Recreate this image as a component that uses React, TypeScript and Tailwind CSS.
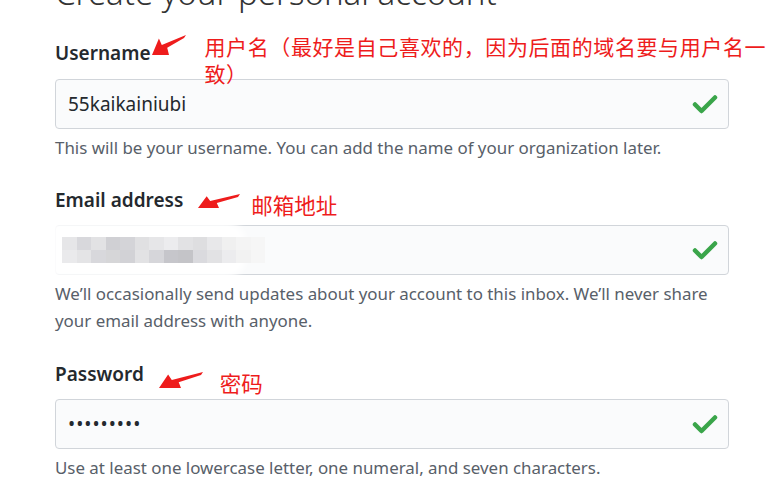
import React from "react";

const Check = () => (
  <svg width="26" height="20" viewBox="0 0 26 20" className="shrink-0">
    <path
      d="M3 10.5l6.5 6.5L23 3.5"
      fill="none"
      stroke="#3aa54a"
      strokeWidth="4.5"
      strokeLinecap="round"
      strokeLinejoin="round"
    />
  </svg>
);

// red annotation arrow, drawn from tail to tip
const Arrow = ({ w, h }: { w: number; h: number }) => (
  <svg width={w} height={h} viewBox={`0 0 ${w} ${h}`}>
    <polygon
      points={`${w - 1},1 ${w - 3},4 ${w * 0.45},${h * 0.62} ${w * 0.5},${h - 1} 1,${h - 1} ${w * 0.22},${h * 0.2} ${w * 0.3},${h * 0.5}`}
      fill="#ee1c1c"
    />
  </svg>
);

const pixels = [
  ["#e6e6e8", "#d8d8dc", "#e2e2e4", "#d0d0d4", "#d4d4d8", "#e0e0e2", "#e6e6e8", "#ececee", "#e2e2e4", "#dedee0", "#e8e8ea", "#f0f0f0", "#f4f4f4", "#f6f6f6"],
  ["#eaeaec", "#e4e4e6", "#d8d8dc", "#d6d6d8", "#d2d2d6", "#e2e2e4", "#d6d6da", "#c6c6cb", "#c4c4c8", "#dadade", "#e2e2e4", "#ececee", "#f2f2f2", "#f6f6f6"],
];

export default function App() {
  return (
    <div className="w-[768px] h-[490px] overflow-hidden bg-white pl-[55px] pr-[39px] font-['Segoe_UI','Noto_Sans',sans-serif] text-[#24292e]">
      <h1 className="-mt-[27px] text-[33px] font-light leading-[40px] text-[#333]">
        Create your personal account
      </h1>

      <div className="mt-[19px]">
        <div className="flex items-start h-[34px]">
          <span className="text-[19px] font-semibold leading-[34px] mt-[4px]">Username</span>
          <div className="mt-[2px]"><Arrow w={36} h={22} /></div>
          <div className="ml-[18px] mt-[1px] text-[21px] tracking-[0.6px] leading-[27px] text-[#ee1c1c] font-['Noto_Sans_CJK_SC',sans-serif] whitespace-nowrap">
            用户名（最好是自己喜欢的，因为后面的域名要与用户名一
            <br />
            致）
          </div>
        </div>
        <div className="mt-[13px] h-[50px] rounded-[4px] border border-[#d1d5da] bg-[#fafbfc] flex items-center justify-between pl-[12px] pr-[10px]">
          <span className="text-[19px]">55kaikainiubi</span>
          <Check />
        </div>
        <p className="mt-[5px] text-[16.9px] leading-[27px] text-[#586069]">
          This will be your username. You can add the name of your organization later.
        </p>
      </div>

      <div className="mt-[22px]">
        <div className="flex items-start h-[34px]">
          <span className="text-[19px] font-semibold leading-[34px]">Email address</span>
          <div className="mt-[10px] ml-[14px]"><Arrow w={44} h={16} /></div>
          <span className="ml-[10px] mt-[8px] text-[21.5px] leading-[27px] text-[#ee1c1c] font-['Noto_Sans_CJK_SC',sans-serif]">邮箱地址</span>
        </div>
        <div className="relative mt-[8px] h-[50px] rounded-[4px] border border-[#d1d5da] bg-[#fafbfc] flex items-center justify-between pl-[6px] pr-[10px]">
          <div className="absolute -left-[20px] -top-[4px] w-[210px] h-[56px] rounded-[20px] bg-white/90 blur-[3px]" />
          <div className="relative flex flex-col">
            {pixels.map((row, i) => (
              <div key={i} className="flex">
                {row.map((c, j) => (
                  <div key={j} className="w-[14.5px] h-[13px]" style={{ background: c }} />
                ))}
              </div>
            ))}
          </div>
          <Check />
        </div>
        <p className="mt-[5px] text-[16.9px] leading-[27px] text-[#586069]">
          We’ll occasionally send updates about your account to this inbox. We’ll never share your email address with anyone.
        </p>
      </div>

      <div className="mt-[23px]">
        <div className="flex items-start h-[34px]">
          <span className="text-[19px] font-semibold leading-[34px]">Password</span>
          <div className="mt-[14px] ml-[14px]"><Arrow w={46} h={18} /></div>
          <span className="ml-[16px] mt-[12px] text-[21.5px] leading-[27px] text-[#ee1c1c] font-['Noto_Sans_CJK_SC',sans-serif]">密码</span>
        </div>
        <div className="mt-[8px] h-[50px] rounded-[4px] border border-[#d1d5da] bg-[#fafbfc] flex items-center justify-between pl-[12px] pr-[10px]">
          <span className="text-[19px] tracking-[1px]">•••••••••</span>
          <Check />
        </div>
        <p className="mt-[5px] text-[16.9px] leading-[27px] text-[#586069]">
          Use at least one lowercase letter, one numeral, and seven characters.
        </p>
      </div>
    </div>
  );
}
